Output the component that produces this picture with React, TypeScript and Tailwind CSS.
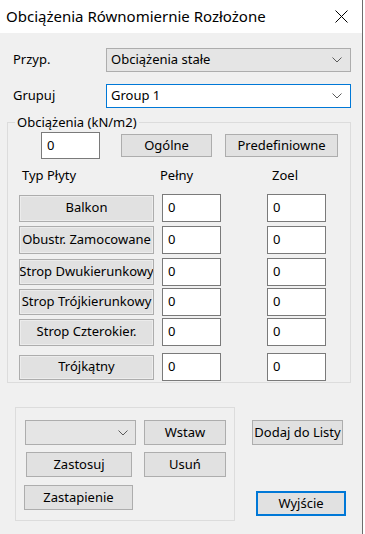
import React from "react";

const font = "font-['Noto_Sans',sans-serif]";

function Chevron() {
  return (
    <svg width="10" height="6" viewBox="0 0 10 6" className="shrink-0">
      <path d="M0.5 0.5 L5 5 L9.5 0.5" fill="none" stroke="#5a5a5a" strokeWidth="1" />
    </svg>
  );
}

function Btn({ label, className = "" }: { label: string; className?: string }) {
  return (
    <div
      className={`flex items-center justify-center border border-[#adadad] bg-[#e1e1e1] text-[13px] text-black whitespace-nowrap overflow-hidden ${className}`}
    >
      {label}
    </div>
  );
}

function Field({ className = "" }: { className?: string }) {
  return (
    <div className={`flex items-center border border-[#7a7a7a] bg-white pl-[5px] text-[13px] ${className}`}>
      0
    </div>
  );
}

const rows = [
  { label: "Balkon", mt: "mt-[8px]", btn: "h-[27px]" },
  { label: "Obustr. Zamocowane", mt: "mt-[4px]", btn: "h-[28px]" },
  { label: "Strop Dwukierunkowy", mt: "mt-[4px]", btn: "h-[26px]" },
  { label: "Strop Trójkierunkowy", mt: "mt-[2px]", btn: "h-[26px]" },
  { label: "Strop Czterokier.", mt: "mt-[2px]", btn: "h-[27px]" },
  { label: "Trójkątny", mt: "mt-[7px]", btn: "h-[25px]" },
];

export default function App() {
  return (
    <div className={`flex h-[534px] w-[365px] bg-white text-black ${font}`}>
      <div className="flex w-[362px] flex-col">
        {/* title bar */}
        <div className="flex h-[33px] items-center justify-between bg-white pl-[6px] pr-[14px]">
          <span className="text-[15px]">Obciążenia Równomiernie Rozłożone</span>
          <svg width="13" height="13" viewBox="0 0 13 13">
            <path d="M0.5 0.5 L12.5 12.5 M12.5 0.5 L0.5 12.5" stroke="#000" strokeWidth="1" />
          </svg>
        </div>

        <div className="flex flex-1 flex-col bg-[#f0f0f0] text-[13px]">
          {/* Przyp. */}
          <div className="mt-[15px] flex h-[24px] items-center">
            <span className="w-[106px] pl-[13px]">Przyp.</span>
            <div className="flex h-full w-[245px] items-center justify-between border border-[#adadad] bg-[#e5e5e5] pl-[4px] pr-[8px]">
              <span>Obciążenia stałe</span>
              <Chevron />
            </div>
          </div>

          {/* Grupuj */}
          <div className="mt-[12px] flex h-[24px] items-center">
            <span className="w-[106px] pl-[13px]">Grupuj</span>
            <div className="flex h-full w-[245px] items-center justify-between border border-[#0078d7] bg-white pl-[4px] pr-[8px]">
              <span>Group 1</span>
              <Chevron />
            </div>
          </div>

          {/* Obciążenia group */}
          <fieldset className="ml-[7px] mt-[5px] h-[270px] w-[344px] border border-[#dcdcdc]">
            <legend className="ml-[7px] px-[2px] text-[13px] leading-[18px]">Obciążenia (kN/m2)</legend>
            <div className="mt-[1px] flex items-center">
              <Field className="ml-[33px] h-[27px] w-[59px]" />
              <Btn label="Ogólne" className="ml-[21px] h-[23px] w-[91px]" />
              <Btn label="Predefiniowne" className="ml-[13px] h-[23px] w-[113px]" />
            </div>
            <div className="mt-[7px] flex h-[20px] items-center">
              <span className="ml-[14px] w-[138px]">Typ Płyty</span>
              <span className="w-[112px]">Pełny</span>
              <span>Zoel</span>
            </div>
            {rows.map((r) => (
              <div key={r.label} className={`flex h-[28px] items-center ${r.mt}`}>
                <Btn label={r.label} className={`ml-[11px] w-[135px] ${r.btn} shadow-[inset_0_0_0_1px_#ececec]`} />
                <Field className="ml-[8px] h-[28px] w-[59px]" />
                <Field className="ml-[46px] h-[28px] w-[59px]" />
              </div>
            ))}
          </fieldset>

          {/* bottom area */}
          <div className="mt-[24px] flex">
            <div className="ml-[15px] flex h-[114px] w-[220px] flex-col border border-[#dcdcdc]">
              <div className="mt-[12px] flex items-center">
                <div className="ml-[9px] flex h-[25px] w-[111px] items-center justify-end border border-[#adadad] bg-[#e5e5e5] pr-[7px]">
                  <Chevron />
                </div>
                <Btn label="Wstaw" className="ml-[8px] h-[25px] w-[82px]" />
              </div>
              <div className="mt-[7px] flex items-center">
                <Btn label="Zastosuj" className="ml-[10px] h-[25px] w-[106px]" />
                <Btn label="Usuń" className="ml-[12px] h-[25px] w-[82px]" />
              </div>
              <div className="mt-[8px] flex items-center">
                <Btn label="Zastapienie" className="ml-[8px] h-[25px] w-[109px]" />
              </div>
            </div>
            <div className="ml-[17px] flex flex-col">
              <Btn label="Dodaj do Listy" className="mt-[13px] h-[25px] w-[91px]" />
              <div className="ml-[4px] mt-[46px] flex h-[25px] w-[90px] items-center justify-center border-2 border-[#0078d7] bg-[#e1e1e1] text-[13px]">
                Wyjście
              </div>
            </div>
          </div>
        </div>
      </div>
      <div className="w-px bg-[#6d6d6d]" />
      <div className="w-[2px] bg-white" />
    </div>
  );
}
